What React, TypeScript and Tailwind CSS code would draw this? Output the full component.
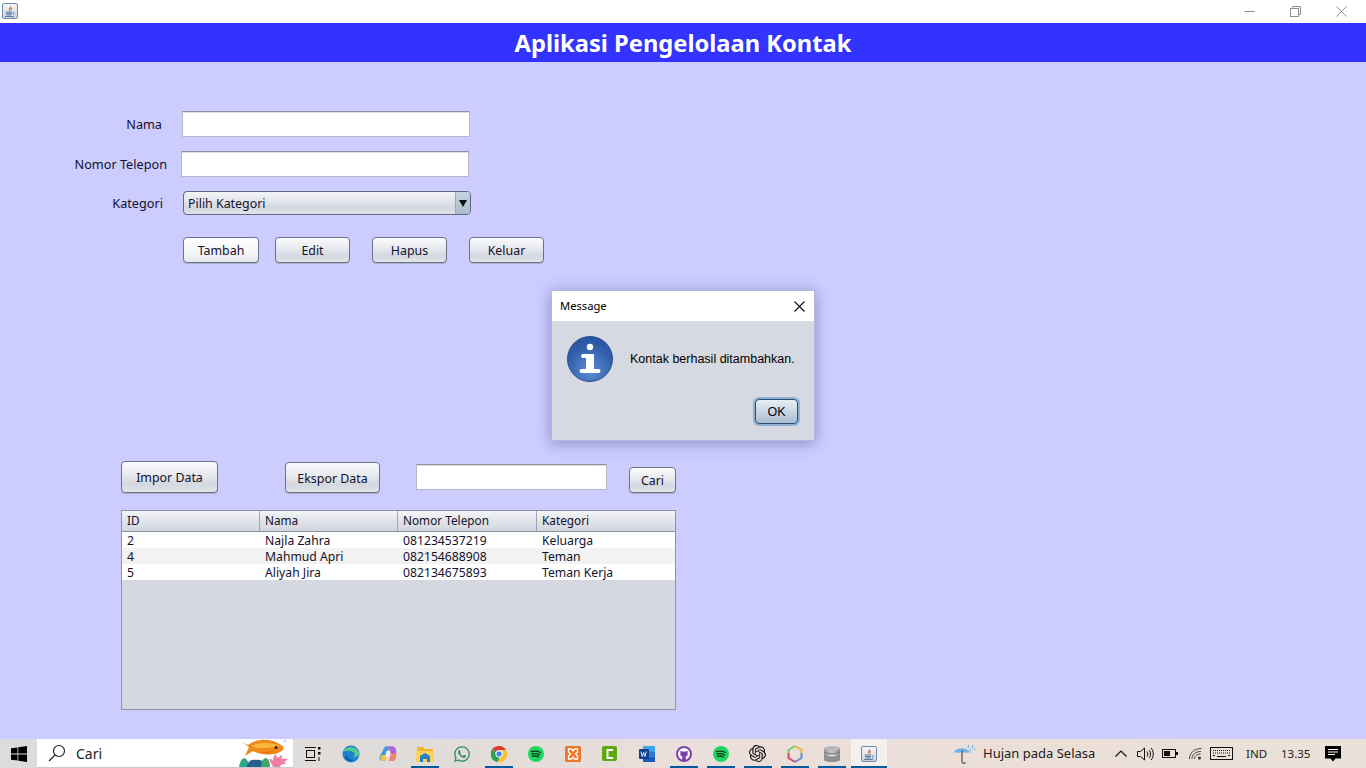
import React from "react";
import { SiOpenai } from "react-icons/si";
import { FaWhatsapp } from "react-icons/fa";

const F = "[font-family:'Noto_Sans','Open_Sans',sans-serif]";
const btnBase =
  "flex items-center justify-center rounded-[4px] border border-[#6a7488] bg-[linear-gradient(#fbfbfc,#e6e8ed_45%,#d3d7e0_75%,#e2e5ea)] pt-[3px] text-[12.4px] text-[#14122b] shadow-[0_1px_0_#aab0c8]";

function Btn({ w, h, label, className = "" }: { w: string; h: string; label: string; className?: string }) {
  return <div className={`${btnBase} ${w} ${h} ${className}`}>{label}</div>;
}

function Field({ className = "" }: { className?: string }) {
  return (
    <div className={`h-[26px] border border-[#b5b7c4] border-t-[#8f9099] bg-white shadow-[inset_0_1px_0_#dcdce2] ${className}`} />
  );
}

function JavaIcon({ size = 16 }: { size?: number }) {
  return (
    <svg width={size} height={size} viewBox="0 0 16 16">
      <defs>
        <linearGradient id="jv" x1="0" y1="0" x2="0" y2="1">
          <stop offset="0" stopColor="#f6f8fb" />
          <stop offset="1" stopColor="#c8d4e2" />
        </linearGradient>
      </defs>
      <rect x="0.500" y="0.500" width="15" height="15" rx="1.500" fill="url(#jv)" stroke="#6f8aa6" />
      <path d="M8.500 2C9.500 4 6.500 5 7 7c.2.8.8 1 1 1.400C7.500 6.500 10.500 5.500 8.500 2z" fill="#e2741d" />
      <path d="M10 4.500C9 5.500 8.500 6.500 9 8c.5-1.500 1-2 1-3.500z" fill="#d9382b" />
      <path d="M3.500 9h7M4 10.500h6M4.500 12h5M3 13.500h9" stroke="#4f7396" strokeWidth="0.900" />
      <path d="M11 9.500c2 0 2 2 0 2" fill="none" stroke="#4f7396" strokeWidth="0.800" />
    </svg>
  );
}

function InfoIcon() {
  return (
    <svg width="46" height="46" viewBox="0 0 46 46">
      <defs>
        <radialGradient id="inf" cx="0.5" cy="0.75" r="0.8">
          <stop offset="0" stopColor="#5f8fd8" />
          <stop offset="0.6" stopColor="#3462ae" />
          <stop offset="1" stopColor="#234f9c" />
        </radialGradient>
      </defs>
      <circle cx="23" cy="23" r="22.500" fill="url(#inf)" stroke="#2b5090" />
      <circle cx="23" cy="11" r="3.200" fill="#fff" />
      <path d="M16 18h11v15h4.500a1.500 1.500 0 0 1 0 4h-17a1.500 1.500 0 0 1 0-4H19V22h-3a2 2 0 0 1 0-4z" fill="#fff" />
    </svg>
  );
}

const Wrap = ({ children, on }: { children: React.ReactNode; on?: boolean }) => (
  <div className="relative flex h-[29px] w-[37px] shrink-0 items-center justify-center">
    {children}
    {on && <div className="absolute bottom-0 left-1/2 h-[2px] w-[28px] -translate-x-1/2 bg-[#005a9e]" />}
  </div>
);

const SpotifyIcon = () => (
  <svg width="16" height="16" viewBox="0 0 16 16">
    <circle cx="8" cy="8" r="8" fill="#1ed760" />
    <path d="M3.500 5.600c3-.8 6-.6 9 .9M4 8c2.500-.6 5.200-.4 7.500.9M4.500 10.300c2-.5 4.200-.3 6 .7" stroke="#14351f" strokeWidth="1.300" fill="none" strokeLinecap="round" />
  </svg>
);

const rows = [
  ["2", "Najla Zahra", "081234537219", "Keluarga"],
  ["4", "Mahmud Apri", "082154688908", "Teman"],
  ["5", "Aliyah Jira", "082134675893", "Teman Kerja"],
];
const cols = ["w-[138px]", "w-[138px]", "w-[139px]", "flex-1"];

export default function App() {
  return (
    <div className={`flex h-[768px] w-[1366px] flex-col overflow-hidden ${F}`}>
      {/* window title bar */}
      <div className="flex h-[23px] shrink-0 items-center justify-between bg-white pl-[2px] pr-[2px]">
        <div className="-mt-[1px]"><JavaIcon /></div>
        <div className="flex items-center">
          <div className="flex w-[46px] justify-center">
            <svg width="11" height="11" viewBox="0 0 11 11"><path d="M0.500 5.500h10" stroke="#8f8f8f" /></svg>
          </div>
          <div className="flex w-[46px] justify-center">
            <svg width="11" height="11" viewBox="0 0 11 11" fill="none" stroke="#8f8f8f"><rect x="0.500" y="2.500" width="8" height="8" /><path d="M2.500 2.500v-2h8v8h-2" /></svg>
          </div>
          <div className="flex w-[46px] justify-center">
            <svg width="11" height="11" viewBox="0 0 11 11" stroke="#8f8f8f"><path d="M0.500 0.500l10 10M10.500 0.500l-10 10" /></svg>
          </div>
        </div>
      </div>

      {/* heading */}
      <div className="flex h-[39px] shrink-0 items-center justify-center bg-[#3333ff] pt-[2px] text-[23.7px] font-bold leading-none text-white">
        Aplikasi Pengelolaan Kontak
      </div>

      {/* main */}
      <div className="relative flex flex-1 flex-col bg-[#ccccff] text-[12.7px] text-[#14122b]">
        <div className="mt-[49px] flex items-center">
          <div className="w-[162px] pt-[2px] text-right">Nama</div>
          <Field className="ml-[20px] w-[288px]" />
        </div>
        <div className="mt-[14px] flex items-center">
          <div className="w-[167px] pt-[2px] text-right">Nomor Telepon</div>
          <Field className="ml-[14px] w-[288px]" />
        </div>
        <div className="mt-[14px] flex items-center">
          <div className="w-[163px] pt-[2px] text-right">Kategori</div>
          <div className="ml-[20px] flex h-[24px] w-[288px] overflow-hidden rounded-[4px] border border-[#5e6880] bg-[linear-gradient(#f3f4f6,#e2e4ea_45%,#d3d7e0_70%,#e1e3e9)]">
            <div className="flex-1 pl-[4px] text-[12.4px] leading-[24px]">Pilih Kategori</div>
            <div className="flex w-[15px] items-center justify-center border-l border-[#9aa8b8] bg-[linear-gradient(#c6d4e2,#a9bccd)]">
              <svg width="8" height="8" viewBox="0 0 8 8"><path d="M0 1h8L4 8z" fill="#111" /></svg>
            </div>
          </div>
        </div>
        <div className="ml-[183px] mt-[22px] flex">
          <Btn w="w-[76px]" h="h-[26px]" label="Tambah" className="border-[#3f4658] bg-[linear-gradient(#ffffff,#f4f5f8_60%,#e6e9ef)]" />
          <Btn w="w-[75px]" h="h-[26px]" label="Edit" className="ml-[16px]" />
          <Btn w="w-[75px]" h="h-[26px]" label="Hapus" className="ml-[22px]" />
          <Btn w="w-[75px]" h="h-[26px]" label="Keluar" className="ml-[22px]" />
        </div>

        <div className="ml-[121px] mt-[198px] flex h-[32px] items-start">
          <Btn w="w-[97px]" h="h-[32px]" label="Impor Data" />
          <Btn w="w-[95px]" h="h-[31px]" label="Ekspor Data" className="ml-[67px] mt-[1px]" />
          <Field className="ml-[36px] mt-[3px] w-[191px]" />
          <Btn w="w-[47px]" h="h-[26px]" label="Cari" className="ml-[22px] mt-[6px]" />
        </div>

        <div className="ml-[121px] mt-[17px] flex h-[200px] w-[555px] flex-col border border-[#8f93a2] bg-[#d5d8e0] text-[12.2px]">
          <div className="flex h-[21px] border-b border-[#8a8f9e] bg-[linear-gradient(#f4f5f7,#e2e4ea_50%,#d2d6df)] text-[11.8px]">
            {["ID", "Nama", "Nomor Telepon", "Kategori"].map((c, i) => (
              <div key={c} className={`${cols[i]} border-r border-[#a0a5b4] pl-[5px] leading-[18px] last:border-r-0`}>{c}</div>
            ))}
          </div>
          {rows.map((r, i) => (
            <div key={r[0]} className={`flex h-[16px] leading-[18px] ${i === 1 ? "bg-[#f2f2f2]" : "bg-white"}`}>
              {r.map((c, j) => (
                <div key={j} className={`${cols[j]} pl-[5px]`}>{c}</div>
              ))}
            </div>
          ))}
        </div>

        {/* dialog */}
        <div className="absolute left-[551px] top-[228px] flex h-[151px] w-[264px] flex-col border border-[#b4b6dc] bg-[#d6d9e1] shadow-[0_2px_14px_rgba(60,60,130,0.45)]">
          <div className="flex h-[30px] shrink-0 items-center justify-between bg-white pl-[8px] pr-[9px] text-[11.2px] text-black">
            <span>Message</span>
            <svg width="11" height="11" viewBox="0 0 11 11" stroke="#111" strokeWidth="1.100"><path d="M0.500 0.500l10 10M10.500 0.500l-10 10" /></svg>
          </div>
          <div className="ml-[15px] mt-[15px] flex items-center">
            <InfoIcon />
            <span className="ml-[17px] font-['Liberation_Sans'] text-[12.5px] text-black">Kontak berhasil ditambahkan.</span>
          </div>
          <div className="mr-[16px] mt-[17px] flex justify-end">
            <div className="flex h-[25px] w-[43px] items-center justify-center rounded-[4px] border border-[#2c4c74] bg-[linear-gradient(#e8eef4,#c6d4e2_55%,#a9bdd0)] pt-[1px] font-['Liberation_Sans'] text-[12.500px] text-black shadow-[0_0_0_2px_#8fb1d4]">OK</div>
          </div>
        </div>
      </div>

      {/* taskbar */}
      <div className="flex h-[29px] shrink-0 items-center bg-[linear-gradient(90deg,#dcdcdc,#e0dcd9_30%,#ecdfda_55%,#ebdfd8_80%,#e9e1d8)] text-[#1b1b1b]">
        <div className="flex w-[37px] shrink-0 justify-center">
          <svg width="16" height="16" viewBox="0 0 16 16" fill="#000"><path d="M0 2.300l6.500-.9v6.200H0zM7.300 1.300L16 0v7.600H7.300zM0 8.400h6.500v6.200L0 13.700zM7.300 8.400H16V16l-8.700-1.300z" /></svg>
        </div>
        <div className="relative flex h-[29px] w-[256px] shrink-0 items-center overflow-hidden border-b border-[#c8c8c8] bg-white pl-[11px]">
          <svg width="18" height="18" viewBox="0 0 18 18" fill="none" stroke="#222" strokeWidth="1.200"><circle cx="11" cy="7" r="5.500" /><path d="M7 11l-6 6" /></svg>
          <span className="ml-[10px] text-[14px]">Cari</span>
          <svg className="absolute bottom-0 right-0" width="54" height="29" viewBox="0 0 54 29">
            <circle cx="46" cy="3" r="1.800" fill="#cfe6f2" />
            <circle cx="44" cy="8" r="1.200" fill="#cfe6f2" />
            <path d="M3 4l7 5-4 9 8-5c8 5 24 5 30-1 1-2 0-4-2-5-9-7-24-7-33 0z" fill="#f08a1d" />
            <path d="M12 8c8-4 20-4 29 0-8 2-21 3-29 0z" fill="#f9b73c" />
            <path d="M20 14c5 1 12 0 16-2-3 3-11 4-16 2z" fill="#d9650f" />
            <circle cx="37" cy="9.500" r="1.500" fill="#3a1a05" />
            <path d="M0 29c1-6 3-9 6-9 1 1 4 3 4 9z" fill="#2fa88a" />
            <path d="M8 29c0-5 4-8 9-7 5-1 9 2 9 7z" fill="#24618f" />
            <path d="M22 29c0-5 2-9 5-9 3 1 4 5 4 9z" fill="#3fa86b" />
            <path d="M34 29c-1-3-3-5-4-8 2 0 3 0 4 2 0-3 1-6 3-7 0 2 1 3 2 4 1-1 3-3 4-3 0 2 0 3-1 4 3-1 5 0 7 0-2 2-3 3-5 3 2 0 3 1 3 2-3 0-5 0-6 3z" fill="#ef7fa3" />
          </svg>
        </div>
        <div className="flex w-[39px] shrink-0 justify-center">
          <svg width="16" height="16" viewBox="0 0 16 16" fill="none" stroke="#111"><path d="M0 1.500h11M0 14.500h11" /><rect x="1.500" y="4.500" width="8" height="7" /><rect x="13" y="1" width="2.500" height="2.500" fill="#111" stroke="none" /><rect x="13" y="6" width="2.500" height="2.500" fill="#111" stroke="none" /><path d="M14 11v4" /></svg>
        </div>
        <Wrap>
          <svg width="18" height="18" viewBox="0 0 18 18">
            <circle cx="9" cy="9" r="8.500" fill="#1f7fd0" />
            <path d="M1 7C3 1 15 0 17 8c.5 3-3 4.500-6 4 2-1 2.500-3 1-4.500-3-2.500-8-2-11-.5z" fill="#55d08c" />
            <path d="M5 10c0 4 5 6 8 5-4 2-9 1-10-3z" fill="#0f5fa8" />
          </svg>
        </Wrap>
        <Wrap>
          <svg width="18" height="18" viewBox="0 0 18 18">
            <path d="M6 1.500h4L8 9l-2 7H3.500C1 16 0 13.500 .8 11z" fill="#3b9be8" />
            <path d="M8 1.500h6c1.500 0 2.500 1 3 3 .6 3 .4 7-.5 9-.5 1.500-1.500 2.500-3 2.500H10l2-7z" fill="#e85fa8" />
            <path d="M9 1.500h4.500c1.500 0 2.500 1 3 3L17 8h-5l-1-3c-.4-1-1-1.500-2-1.500z" fill="#a06be0" />
            <path d="M2 10h6.500l-1 3.500C7 15 6 16 4.500 16h-1C1.500 16 1 13 2 10z" fill="#f5c33b" />
            <path d="M12 9h5c.2 3-.5 7-3.500 7H9c1.500 0 2.500-1 3-2.500z" fill="#f08a5d" />
            <path d="M7.500 6h4L10 12H6z" fill="#f3eaf5" />
          </svg>
        </Wrap>
        <Wrap on>
          <svg width="18" height="16" viewBox="0 0 18 16">
            <path d="M1 1h6l2 2h8v4H1z" fill="#f2b628" />
            <path d="M0 5h18v11H0z" fill="#fbd35c" />
            <path d="M4 16v-6l5-3 5 3v6h-3v-3H7v3z" fill="#1f7fc8" />
          </svg>
        </Wrap>
        <Wrap><FaWhatsapp size={18} color="#2a8f62" /></Wrap>
        <Wrap on>
          <svg width="16" height="16" viewBox="0 0 16 16">
            <path d="M8 0a8 8 0 0 1 7 4H8a4 4 0 0 0-3.700 2.500L1.700 2.500A8 8 0 0 1 8 0z" fill="#e33b2e" />
            <path d="M1.700 2.500l3.500 6a4 4 0 0 0 3.800 2L6.800 16A8 8 0 0 1 1.700 2.500z" fill="#2ba24c" />
            <path d="M15 4a8 8 0 0 1-8.200 12L10 10.500A4 4 0 0 0 11 4z" fill="#fbc02d" />
            <circle cx="8" cy="8" r="3.200" fill="#3b82f0" stroke="#fff" />
          </svg>
        </Wrap>
        <Wrap><SpotifyIcon /></Wrap>
        <Wrap>
          <svg width="16" height="16" viewBox="0 0 16 16">
            <rect width="16" height="16" rx="1.500" fill="#f0762b" />
            <path d="M3.500 3h3l1.500 2 1.500-2h3v3l-2 2 2 2v3h-3L8 11l-1.500 2h-3v-3l2-2-2-2z" fill="none" stroke="#fff" strokeWidth="1.300" />
          </svg>
        </Wrap>
        <Wrap>
          <svg width="16" height="16" viewBox="0 0 16 16">
            <rect width="15" height="15" rx="2" fill="#5fa810" />
            <path d="M11 4H5.500v8H11" fill="none" stroke="#fff" strokeWidth="2" />
          </svg>
        </Wrap>
        <Wrap>
          <svg width="16" height="16" viewBox="0 0 16 16">
            <rect x="4" y="0" width="12" height="5.500" fill="#41a5ee" />
            <rect x="4" y="5.300" width="12" height="5.400" fill="#2b7cd3" />
            <rect x="4" y="10.600" width="12" height="5.400" fill="#185abd" />
            <rect x="0" y="3" width="10" height="10" rx="1" fill="#103f91" />
            <path d="M2 5.500l1.200 5 1.400-4 1.400 4 1.200-5" fill="none" stroke="#fff" strokeWidth="0.900" />
          </svg>
        </Wrap>
        <Wrap on>
          <svg width="16" height="16" viewBox="0 0 16 16">
            <circle cx="8" cy="8" r="7" fill="#fff" stroke="#7d3fa8" strokeWidth="2" />
            <path d="M4.500 5c1 0 1.500.3 2 .6a6 6 0 0 1 3 0c.5-.3 1-.6 2-.6.300 1 .2 1.500 0 2 .8 2-.5 3.500-2 3.800.300.500.4 1 .4 3.200h-3.800c0-2.200.1-2.700.4-3.200-1.500-.3-2.800-1.800-2-3.800-.2-.5-.3-1 0-2z" fill="#7d3fa8" />
          </svg>
        </Wrap>
        <Wrap on><SpotifyIcon /></Wrap>
        <Wrap on><SiOpenai size={17} color="#111" /></Wrap>
        <Wrap on>
          <svg width="16" height="18" viewBox="0 0 16 18" fill="none" strokeWidth="2">
            <path d="M8 1L1.500 5v3" stroke="#7fc66e" />
            <path d="M8 1l6.500 4v3" stroke="#e6b93c" />
            <path d="M14.500 8v5L8 17" stroke="#5a8fd6" />
            <path d="M1.500 8v5L8 17" stroke="#cf4a6c" />
          </svg>
        </Wrap>
        <Wrap on>
          <svg width="16" height="16" viewBox="0 0 16 16">
            <defs>
              <linearGradient id="db" x1="0" y1="0" x2="1" y2="0">
                <stop offset="0" stopColor="#8f8f8f" />
                <stop offset="0.5" stopColor="#d2d2d2" />
                <stop offset="1" stopColor="#8a8a8a" />
              </linearGradient>
            </defs>
            <rect y="2" width="16" height="12" fill="url(#db)" />
            <ellipse cx="8" cy="2.500" rx="8" ry="2.500" fill="#b8b8b8" />
            <ellipse cx="8" cy="14" rx="8" ry="2" fill="#8f8f8f" />
            <path d="M0 6c3 2 13 2 16 0M0 10c3 2 13 2 16 0" fill="none" stroke="#777" />
          </svg>
        </Wrap>
        <div className="relative ml-[1px] flex h-[29px] w-[36px] shrink-0 items-center justify-center bg-[#f4f0ee]">
          <JavaIcon />
          <div className="absolute bottom-0 left-0 h-[2px] w-full bg-[#005a9e]" />
        </div>

        <div className="ml-[62px] flex w-[29px] shrink-0 justify-center">
          <svg width="24" height="24" viewBox="0 0 24 24">
            <path d="M1 12C3 5 14 4 19 11c-2-1-3-1-4 0-2-1-3-1-4 0-2-1-3-1-4 0-2-1-4-1-6 0z" fill="#6cb4e6" />
            <path d="M10 8v11c0 3 3 3 3 1" stroke="#6c6c6c" strokeWidth="1.500" fill="none" />
            <path d="M17 3l-1 3M21 3l-1 3M19 7l-1 2M23 6l-1 2" stroke="#6cb4e6" strokeWidth="1.200" />
          </svg>
        </div>
        <div className="ml-[5px] w-[126px] shrink-0 whitespace-nowrap text-[13px]">Hujan pada Selasa</div>
        <div className="flex w-[24px] shrink-0 justify-center">
          <svg width="12" height="7" viewBox="0 0 12 7" fill="none" stroke="#111" strokeWidth="1.200"><path d="M0.500 6.500L6 1l5.500 5.500" /></svg>
        </div>
        <div className="flex w-[24px] shrink-0 justify-center">
          <svg width="17" height="14" viewBox="0 0 17 14" fill="none" stroke="#111"><path d="M0.500 4.500h3L7.500 1v12l-4-3.500h-3z" /><path d="M10 4.500c1 1.500 1 3.500 0 5M12 3c2 2 2 6 0 8M14 1c3 3 3 9 0 12" /></svg>
        </div>
        <div className="flex w-[26px] shrink-0 justify-center">
          <svg width="16" height="9" viewBox="0 0 16 9" fill="none" stroke="#111"><rect x="0.500" y="0.500" width="13" height="8" /><rect x="2" y="2" width="6" height="5" fill="#111" stroke="none" /><rect x="14" y="3" width="2" height="3" fill="#111" stroke="none" /></svg>
        </div>
        <div className="flex w-[24px] shrink-0 justify-center">
          <svg width="13" height="12" viewBox="0 0 13 12" fill="none" stroke="#333" strokeWidth="0.900"><path d="M0.500 11C0.500 5 5 0.500 12.500 0.500M3 11c0-4 3-7.500 9-7.500M5.500 11c0-2.500 2-5 6-5" /><circle cx="10.500" cy="10" r="1.500" fill="#333" stroke="none" /></svg>
        </div>
        <div className="flex w-[28px] shrink-0 justify-center">
          <svg width="23" height="13" viewBox="0 0 23 13" fill="none" stroke="#111"><rect x="0.500" y="0.500" width="22" height="12" /><path d="M3 3.500h17M3 6h17" strokeDasharray="1 1" /><path d="M3 8.500h2M7 9.500h9M18 8.500h2" /></svg>
        </div>
        <div className="ml-[11px] w-[31px] shrink-0 text-[11.500px]">IND</div>
        <div className="ml-[4px] w-[34px] shrink-0 text-[11.500px]">13.35</div>
        <div className="ml-[10px] flex w-[16px] shrink-0 justify-center">
          <svg width="16" height="16" viewBox="0 0 16 16"><path d="M0 0h16v12.500h-5.500L8 15.500l-2.500-3H0z" fill="#000" /><path d="M3 3.500h10M3 6h10M3 8.500h7" stroke="#fff" /></svg>
        </div>
      </div>
    </div>
  );
}
